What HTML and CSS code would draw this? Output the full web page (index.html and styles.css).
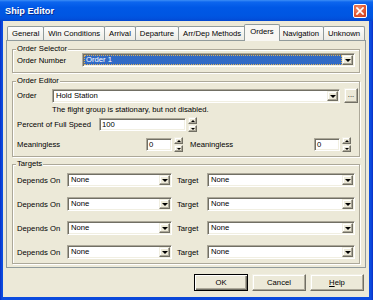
FILE: index.html
```html
<!DOCTYPE html>
<html>
<head>
<meta charset="utf-8">
<title>Ship Editor</title>
<link rel="stylesheet" href="styles.css">
</head>
<body>
<div class="window">
  <div class="titlebar">
    <span class="title">Ship Editor</span>
    <span class="close"><svg width="8" height="8" viewBox="0 0 8 8"><path d="M1 1L7 7M7 1L1 7" stroke="#fff" stroke-width="1.7" stroke-linecap="square"/></svg></span>
  </div>
  <div class="client">
    <div class="tabs">
      <div class="tab">General</div>
      <div class="tab">Win Conditions</div>
      <div class="tab">Arrival</div>
      <div class="tab">Departure</div>
      <div class="tab">Arr/Dep Methods</div>
      <div class="tab active">Orders</div>
      <div class="tab">Navigation</div>
      <div class="tab">Unknown</div>
    </div>
    <div class="panel">
      <fieldset class="group g-selector">
        <legend>Order Selector</legend>
        <div class="row">
          <span class="lbl w-number">Order Number</span>
          <div class="combo c-order"><span class="val selected">Order 1</span><span class="arrow"></span></div>
        </div>
      </fieldset>
      <fieldset class="group g-editor">
        <legend>Order Editor</legend>
        <div class="row row-order">
          <span class="lbl w-order">Order</span>
          <div class="combo c-ordertype"><span class="val">Hold Station</span><span class="arrow"></span></div>
          <span class="small-btn">...</span>
        </div>
        <div class="desc">The flight group is stationary, but not disabled.</div>
        <div class="row row-speed">
          <span class="lbl w-speed">Percent of Full Speed</span>
          <span class="edit e-speed">100</span>
          <span class="spin"><span class="sbtn up"></span><span class="sbtn down"></span></span>
        </div>
        <div class="row row-mean">
          <span class="lbl w-mean1">Meaningless</span>
          <span class="edit e-mean">0</span>
          <span class="spin"><span class="sbtn up"></span><span class="sbtn down"></span></span>
          <span class="lbl w-mean2">Meaningless</span>
          <span class="edit e-mean">0</span>
          <span class="spin"><span class="sbtn up"></span><span class="sbtn down"></span></span>
        </div>
      </fieldset>
      <fieldset class="group g-targets">
        <legend>Targets</legend>
        <div class="trow">
          <span class="lbl w-dep">Depends On</span>
          <div class="combo c-dep"><span class="val">None</span><span class="arrow"></span></div>
          <span class="lbl w-tgt">Target</span>
          <div class="combo c-tgt"><span class="val">None</span><span class="arrow"></span></div>
        </div>
        <div class="trow">
          <span class="lbl w-dep">Depends On</span>
          <div class="combo c-dep"><span class="val">None</span><span class="arrow"></span></div>
          <span class="lbl w-tgt">Target</span>
          <div class="combo c-tgt"><span class="val">None</span><span class="arrow"></span></div>
        </div>
        <div class="trow">
          <span class="lbl w-dep">Depends On</span>
          <div class="combo c-dep"><span class="val">None</span><span class="arrow"></span></div>
          <span class="lbl w-tgt">Target</span>
          <div class="combo c-tgt"><span class="val">None</span><span class="arrow"></span></div>
        </div>
        <div class="trow">
          <span class="lbl w-dep">Depends On</span>
          <div class="combo c-dep"><span class="val">None</span><span class="arrow"></span></div>
          <span class="lbl w-tgt">Target</span>
          <div class="combo c-tgt"><span class="val">None</span><span class="arrow"></span></div>
        </div>
      </fieldset>
    </div>
    <div class="buttons">
      <span class="btn default">OK</span>
      <span class="btn">Cancel</span>
      <span class="btn"><u>H</u>elp</span>
    </div>
  </div>
</div>
</body>
</html>
```
FILE: styles.css
```css
* { box-sizing: border-box; }
html, body { margin: 0; padding: 0; }
body {
  width: 373px;
  height: 300px;
  overflow: hidden;
  font-family: "Liberation Sans", Arial, sans-serif;
  font-size: 7.7px;
  color: #000;
  background: #ece9d8;
}
.window {
  width: 373px;
  height: 300px;
  display: flex;
  flex-direction: column;
  background: linear-gradient(to right, #0a2fc4 0, #0b4ce0 2px, #0a46d8 50%, #0b4ce0 calc(100% - 2px), #0a2fc4 100%);
}
.titlebar {
  height: 21px;
  flex: none;
  display: flex;
  align-items: center;
  padding: 0 5px 0 5px;
  background: linear-gradient(to bottom, #3c8ef6 0, #0d66ee 2px, #0058e6 35%, #0056e2 75%, #0250dc 90%, #0146cf 100%);
}
.title {
  flex: 1;
  color: #fff;
  font-weight: bold;
  font-size: 9.2px;
  text-shadow: 1px 1px 0 #0b2c8e;
  padding-top: 1px;
}
.close {
  width: 14px;
  height: 14px;
  margin-right: 1px;
  border: 1px solid #fff;
  border-radius: 2px;
  background: radial-gradient(circle at 35% 30%, #ef8a6c 0, #e25a33 55%, #c9391a 100%);
  display: flex;
  align-items: center;
  justify-content: center;
}
.client {
  flex: 1;
  margin: 0 4px 3px 3px;
  background: #ece9d8;
  display: flex;
  flex-direction: column;
  padding: 0 3px;
}
.tabs {
  display: flex;
  align-items: flex-end;
  height: 19px;
  padding-left: 1px;
  flex: none;
}
.tab {
  height: 14px;
  padding: 0 4px;
  line-height: 13px;
  border: 1px solid #919b9c;
  border-bottom: none;
  border-radius: 2px 2px 0 0;
  margin-right: -1px;
  white-space: nowrap;
  background: linear-gradient(to bottom, #fefefe 0, #f5f4f0 50%, #ecebe5 100%);
}
.tab.active {
  height: 17px;
  margin-bottom: -1px;
  margin-left: -1px;
  margin-right: -2px;
  padding: 0 5px;
  line-height: 14px;
  position: relative;
  z-index: 1;
  background: #f8f7f3;
}
.panel {
  flex: none;
  height: 228px;
  border: 1px solid #919b9c;
  padding: 4px 5px 2px;
  background: #ece9d8;
  display: flex;
  flex-direction: column;
}
.group {
  margin: 0;
  border: 1px solid #aca899;
  box-shadow: inset 1px 1px 0 #fff, 1px 1px 0 #fff;
  padding: 0 4px;
  min-width: 0;
}
.group legend {
  padding: 0 1px;
  margin-left: -1px;
  line-height: 8px;
  background: #ece9d8;
}
.g-selector { padding-bottom: 5px; }
.g-editor { margin-top: 4px; padding-bottom: 4px; }
.g-targets { margin-top: 3px; padding-bottom: 4px; }
.row {
  display: flex;
  align-items: center;
}
.lbl { flex: none; white-space: nowrap; }
.w-number { width: 65px; }
.w-order { width: 35px; }
.w-speed { width: 82px; }
.w-mean1 { width: 129px; }
.w-mean2 { width: 124px; margin-left: 7px; }
.w-dep { width: 50px; }
.w-tgt { width: 30px; margin-left: 5px; }

.combo {
  display: flex;
  height: 14px;
  background: #fff;
  border: 1px solid;
  border-color: #aca899 #fff #fff #aca899;
  box-shadow: inset 1px 1px 0 #716f64, inset -1px -1px 0 #f1efe2;
  padding: 1px;
  flex: none;
}
.combo .val {
  flex: 1;
  padding-left: 2px;
  line-height: 10px;
  white-space: nowrap;
  overflow: hidden;
}
.combo .val.selected {
  background: #316ac5;
  color: #fff;
  outline: 1px dotted #d8b060;
  outline-offset: -1px;
}
.combo .arrow, .sbtn, .small-btn, .btn {
  background: #ece9d8;
  border: 1px solid;
  border-color: #f1efe2 #716f64 #716f64 #f1efe2;
  box-shadow: inset -1px -1px 0 #aca899, inset 1px 1px 0 #fff;
}
.combo .arrow {
  width: 11px;
  flex: none;
  display: flex;
  align-items: center;
  justify-content: center;
}
.combo .arrow::after {
  content: "";
  border-left: 3px solid transparent;
  border-right: 3px solid transparent;
  border-top: 3px solid #000;
  margin-top: 1px;
}
.c-order { width: 273px; margin-top: 0; }
.c-ordertype { width: 288px; }
.c-dep { width: 105px; }
.c-tgt { width: 148px; }

.row-order { margin-top: 3px; }
.small-btn {
  width: 14px;
  height: 15px;
  margin-left: 4px;
  margin-right: -3px;
  flex: none;
  display: flex;
  align-items: flex-end;
  justify-content: center;
  line-height: 10px;
  padding-bottom: 2px;
}
.desc {
  margin-left: 35px;
  height: 11px;
  line-height: 12px;
  margin-top: 1px;
}
.row-speed { margin-top: 2px; height: 15px; }
.row-mean { margin-top: 5px; height: 15px; }
.edit {
  flex: none;
  height: 13px;
  background: #fff;
  border: 1px solid;
  border-color: #aca899 #fff #fff #aca899;
  box-shadow: inset 1px 1px 0 #716f64, inset -1px -1px 0 #f1efe2;
  padding: 0 2px;
  line-height: 12px;
}
.e-speed { width: 87px; }
.e-mean { width: 26px; }
.spin {
  flex: none;
  width: 9px;
  height: 15px;
  margin-left: 2px;
  display: flex;
  flex-direction: column;
  gap: 1px;
}
.sbtn {
  flex: 1;
  display: flex;
  align-items: center;
  justify-content: center;
}
.sbtn.up::after, .sbtn.down::after {
  content: "";
  border-left: 2px solid transparent;
  border-right: 2px solid transparent;
}
.sbtn.up::after { border-bottom: 2px solid #000; }
.sbtn.down::after { border-top: 2px solid #000; }

.trow {
  display: flex;
  align-items: center;
  height: 14px;
  margin-top: 10px;
}
.trow:first-of-type { margin-top: 5px; }

.buttons {
  display: flex;
  justify-content: flex-end;
  gap: 4px;
  margin-top: 6px;
  padding-right: 2px;
}
.btn {
  width: 54px;
  height: 17px;
  display: flex;
  align-items: center;
  justify-content: center;
}
.btn.default {
  border: 1px solid #000;
  box-shadow: inset 1px 1px 0 #fff, inset -1px -1px 0 #716f64, inset -2px -2px 0 #aca899;
}
```
